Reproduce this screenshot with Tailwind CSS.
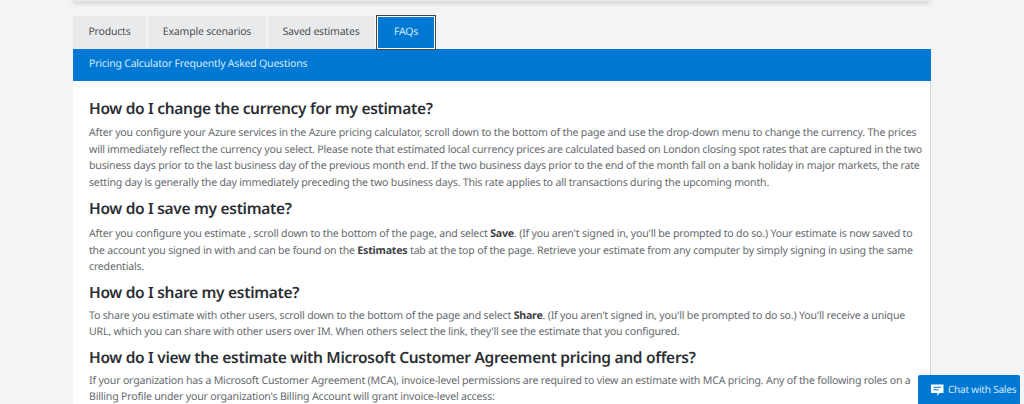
<!DOCTYPE html>
<html><head><meta charset="utf-8">
<script src="https://cdn.jsdelivr.net/npm/@tailwindcss/browser@4"></script>
</head>
<body class="bg-[#f3f4f6] overflow-hidden">
<div class="relative w-[1024px] h-[404px] overflow-hidden font-['Noto_Sans',sans-serif] [text-rendering:geometricPrecision] tracking-[-0.2px]">
  <div class="ml-[73px] w-[857px] h-[1px] bg-[#e8e8e8] shadow-[0_1px_5px_rgba(0,0,0,0.6)]"></div>
  <div class="ml-[73px] w-[858px] mt-[15px]">
    <div class="flex h-[33px] gap-[2px] text-[10.5px] text-[#505050]">
      <div class="w-[73px] bg-[#e9eaec] flex items-center justify-center">Products</div>
      <div class="w-[118px] bg-[#e9eaec] flex items-center justify-center">Example scenarios</div>
      <div class="w-[106px] bg-[#e9eaec] flex items-center justify-center">Saved estimates</div>
      <div class="w-[60px] h-[35px] -mt-[1px] bg-[#0078d4] border border-[#444] outline outline-1 outline-white -outline-offset-2 flex items-center justify-center text-[#d7e9f8] z-10">FAQs</div>
    </div>
    <div class="h-[32px] bg-[#0078d4] text-[#d7e9f8] text-[10.5px] flex items-center pl-[16px]">Pricing Calculator Frequently Asked Questions</div>
    <div class="h-[330px] bg-white border-r border-[#d5d6d8] px-[16px] text-[#666a6e] text-[10.6px] leading-[16.5px] whitespace-nowrap">
      <h2 class="pt-[16px] text-[#2b2f33] text-[15.5px] tracking-[-0.3px] leading-[22px] font-semibold">How do I change the currency for my estimate?</h2>
      <p class="mt-[6px]">After you configure your Azure services in the Azure pricing calculator, scroll down to the bottom of the page and use the drop-down menu to change the currency. The prices<br>will immediately reflect the currency you select. Please note that estimated local currency prices are calculated based on London closing spot rates that are captured in the two<br>business days prior to the last business day of the previous month end. If the two business days prior to the end of the month fall on a bank holiday in major markets, the rate<br>setting day is generally the day immediately preceding the two business days. This rate applies to all transactions during the upcoming month.</p>
      <h2 class="mt-[6px] text-[#2b2f33] text-[15.5px] tracking-[-0.3px] leading-[22px] font-semibold">How do I save my estimate?</h2>
      <p class="mt-[7px]">After you configure you estimate , scroll down to the bottom of the page, and select <b class="text-[#3c4044]">Save</b>. (If you aren't signed in, you'll be prompted to do so.) Your estimate is now saved to<br>the account you signed in with and can be found on the <b class="text-[#3c4044]">Estimates</b> tab at the top of the page. Retrieve your estimate from any computer by simply signing in using the same<br>credentials.</p>
      <h2 class="mt-[5px] text-[#2b2f33] text-[15.5px] tracking-[-0.3px] leading-[22px] font-semibold">How do I share my estimate?</h2>
      <p class="mt-[5px]">To share you estimate with other users, scroll down to the bottom of the page and select <b class="text-[#3c4044]">Share</b>. (If you aren't signed in, you'll be prompted to do so.) You'll receive a unique<br>URL, which you can share with other users over IM. When others select the link, they'll see the estimate that you configured.</p>
      <h2 class="mt-[5px] text-[#2b2f33] text-[15.5px] tracking-[-0.3px] leading-[22px] font-semibold">How do I view the estimate with Microsoft Customer Agreement pricing and offers?</h2>
      <p class="mt-[5px]">If your organization has a Microsoft Customer Agreement (MCA), invoice-level permissions are required to view an estimate with MCA pricing. Any of the following roles on a<br>Billing Profile under your organization's Billing Account will grant invoice-level access:</p>
    </div>
  </div>
  <div class="absolute left-[918px] top-[375px] w-[102px] h-[29px] bg-[#0078d4] rounded-t-[2px] flex items-center gap-[4px] pl-[12px] text-[#d7e9f8] text-[10px] whitespace-nowrap">
    <svg width="14" height="14" viewBox="0 0 14 14" class="shrink-0"><path d="M1 1.500h12.500v8.500h-4l-2.200 3v-3h-6.300z" fill="#fff"/><path d="M3.500 4.300h7.500M3.500 6.800h5" stroke="#0078d4" stroke-width="1"/></svg>
    <span>Chat with Sales</span>
  </div>
</div>
</body></html>
